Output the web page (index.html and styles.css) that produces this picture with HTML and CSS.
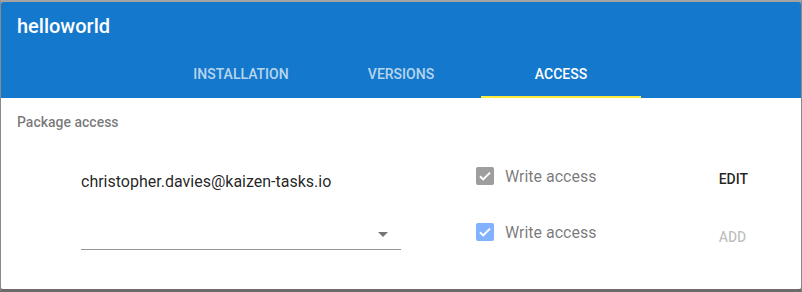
FILE: index.html
```html
<!DOCTYPE html>
<html lang="en">
<head>
    <meta charset="UTF-8">
    <title>helloworld - Access</title>
    <link rel="stylesheet" href="styles.css">
</head>
<body>
    <div class="card">
        <div class="header">
            <h1 class="title">helloworld</h1>
            <div class="tabs">
                <div class="tab">Installation</div>
                <div class="tab">Versions</div>
                <div class="tab active">Access</div>
            </div>
        </div>

        <div class="content">
            <h2 class="section-title">Package access</h2>

            <div class="access-grid">
                <!-- Existing user -->
                <div class="user">christopher.davies@kaizen-tasks.io</div>
                <label class="check">
                    <span class="box disabled">
                        <svg viewBox="0 0 18 18"><path d="M4 9.2l3.2 3.2L14 5.6" /></svg>
                    </span>
                    <span class="check-label">Write access</span>
                </label>
                <div class="action">Edit</div>

                <!-- New user -->
                <div class="select">
                    <span class="arrow"></span>
                </div>
                <label class="check">
                    <span class="box light">
                        <svg viewBox="0 0 18 18"><path d="M4 9.2l3.2 3.2L14 5.6" /></svg>
                    </span>
                    <span class="check-label">Write access</span>
                </label>
                <div class="action disabled">Add</div>
            </div>
        </div>
    </div>
</body>
</html>
```

FILE: styles.css
```css
body {
    margin: 0;
    font-family: 'Roboto', 'Liberation Sans', sans-serif;
    background-color: #8f8f8f;
    border-top: 2px solid #a3a3a3;
    border-left: 1px solid #8a8a8a;
    border-right: 1px solid #8a8a8a;
    border-bottom: 3px solid #6b6b6b;
}

.card {
    background-color: #ffffff;
    border-radius: 2px;
    height: 287px;
    overflow: hidden;
}

.header {
    background-color: #1479cc;
    color: #ffffff;
    height: 96px;
    display: flex;
    flex-direction: column;
}

.title {
    margin: 0;
    padding: 12px 16px 0;
    height: 36px;
    font-size: 20px;
    font-weight: 500;
    line-height: 24px;
}

.tabs {
    display: flex;
    justify-content: center;
    margin-top: auto;
}

.tab {
    width: 160px;
    height: 48px;
    box-sizing: border-box;
    padding-top: 1px;
    display: flex;
    align-items: center;
    justify-content: center;
    font-size: 14px;
    font-weight: 500;
    text-transform: uppercase;
    color: rgba(255, 255, 255, 0.7);
    border-bottom: 2px solid transparent;
}

.tab.active {
    color: #ffffff;
    border-bottom-color: #ffeb3b;
}

.content {
    padding: 16px 0 0;
}

.section-title {
    margin: 0 16px;
    font-size: 14px;
    font-weight: 500;
    line-height: 16px;
    color: rgba(0, 0, 0, 0.54);
}

.access-grid {
    display: grid;
    grid-template-columns: 320px 1fr auto;
    grid-template-rows: 56px 56px;
    column-gap: 75px;
    align-items: center;
    padding: 20px 53px 0 80px;
}

.user {
    font-size: 16px;
    color: rgba(0, 0, 0, 0.87);
    padding-top: 6px;
}

.select {
    height: 32px;
    margin-top: -2px;
    border-bottom: 1px solid rgba(0, 0, 0, 0.42);
    display: flex;
    align-items: center;
    justify-content: flex-end;
    padding-right: 13px;
}

.arrow {
    width: 0;
    height: 0;
    border-left: 5px solid transparent;
    border-right: 5px solid transparent;
    border-top: 5px solid rgba(0, 0, 0, 0.54);
    margin-top: 3px;
}

.check {
    display: flex;
    align-items: center;
    gap: 11px;
    margin-top: -4px;
}

.box {
    width: 18px;
    height: 18px;
    border-radius: 2px;
    display: flex;
}

.box svg {
    width: 18px;
    height: 18px;
    fill: none;
    stroke: #ffffff;
    stroke-width: 2;
}

.box.disabled {
    background-color: #9e9e9e;
}

.box.light {
    background-color: #82b1ff;
}

.check-label {
    font-size: 16px;
    color: rgba(0, 0, 0, 0.54);
}

.action {
    font-size: 14px;
    font-weight: 500;
    text-transform: uppercase;
    color: rgba(0, 0, 0, 0.87);
    padding-top: 2px;
}

.action.disabled {
    color: rgba(0, 0, 0, 0.26);
    padding-top: 6px;
}
```
